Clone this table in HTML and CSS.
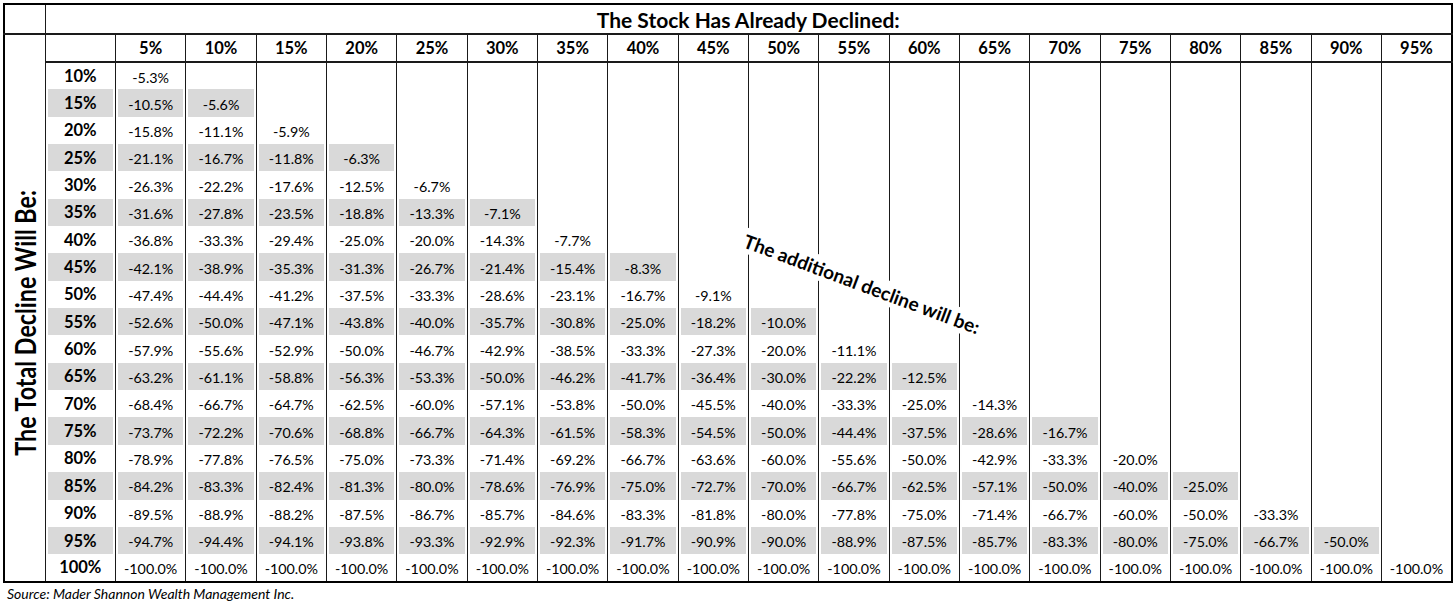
FILE: index.html
```html
<!DOCTYPE html>
<html lang="en">
<head>
<meta charset="utf-8">
<title>Additional Decline Table</title>
<link rel="stylesheet" href="styles.css">
</head>
<body>
<div class="page">
<table class="grid">
<colgroup>
<col class="c-label"><col class="c-rowhead">
<col class="c-data"><col class="c-data"><col class="c-data"><col class="c-data"><col class="c-data"><col class="c-data"><col class="c-data"><col class="c-data"><col class="c-data"><col class="c-data"><col class="c-data"><col class="c-data"><col class="c-data"><col class="c-data"><col class="c-data"><col class="c-data"><col class="c-data"><col class="c-data"><col class="c-data">
</colgroup>
<tr class="r-title"><th class="corner"></th><th class="title" colspan="20">The Stock Has Already Declined:</th></tr>
<tr class="r-head"><th class="label" rowspan="20"><div class="label-box"><span class="label-text">The Total Decline Will Be:</span></div></th><th class="blank"></th><th class="colhead">5%</th><th class="colhead">10%</th><th class="colhead">15%</th><th class="colhead">20%</th><th class="colhead">25%</th><th class="colhead">30%</th><th class="colhead">35%</th><th class="colhead">40%</th><th class="colhead">45%</th><th class="colhead">50%</th><th class="colhead">55%</th><th class="colhead">60%</th><th class="colhead">65%</th><th class="colhead">70%</th><th class="colhead">75%</th><th class="colhead">80%</th><th class="colhead">85%</th><th class="colhead">90%</th><th class="colhead">95%</th></tr>
<tr class="r-data"><th class="rowhead">10%</th><td>-5.3%</td><td></td><td></td><td></td><td></td><td></td><td></td><td></td><td></td><td></td><td></td><td></td><td></td><td></td><td></td><td></td><td></td><td></td><td></td></tr>
<tr class="r-data shade"><th class="rowhead">15%</th><td>-10.5%</td><td>-5.6%</td><td></td><td></td><td></td><td></td><td></td><td></td><td></td><td></td><td></td><td></td><td></td><td></td><td></td><td></td><td></td><td></td><td></td></tr>
<tr class="r-data"><th class="rowhead">20%</th><td>-15.8%</td><td>-11.1%</td><td>-5.9%</td><td></td><td></td><td></td><td></td><td></td><td></td><td></td><td></td><td></td><td></td><td></td><td></td><td></td><td></td><td></td><td></td></tr>
<tr class="r-data shade"><th class="rowhead">25%</th><td>-21.1%</td><td>-16.7%</td><td>-11.8%</td><td>-6.3%</td><td></td><td></td><td></td><td></td><td></td><td></td><td></td><td></td><td></td><td></td><td></td><td></td><td></td><td></td><td></td></tr>
<tr class="r-data"><th class="rowhead">30%</th><td>-26.3%</td><td>-22.2%</td><td>-17.6%</td><td>-12.5%</td><td>-6.7%</td><td></td><td></td><td></td><td></td><td></td><td></td><td></td><td></td><td></td><td></td><td></td><td></td><td></td><td></td></tr>
<tr class="r-data shade"><th class="rowhead">35%</th><td>-31.6%</td><td>-27.8%</td><td>-23.5%</td><td>-18.8%</td><td>-13.3%</td><td>-7.1%</td><td></td><td></td><td></td><td></td><td></td><td></td><td></td><td></td><td></td><td></td><td></td><td></td><td></td></tr>
<tr class="r-data"><th class="rowhead">40%</th><td>-36.8%</td><td>-33.3%</td><td>-29.4%</td><td>-25.0%</td><td>-20.0%</td><td>-14.3%</td><td>-7.7%</td><td></td><td></td><td></td><td></td><td></td><td></td><td></td><td></td><td></td><td></td><td></td><td></td></tr>
<tr class="r-data shade"><th class="rowhead">45%</th><td>-42.1%</td><td>-38.9%</td><td>-35.3%</td><td>-31.3%</td><td>-26.7%</td><td>-21.4%</td><td>-15.4%</td><td>-8.3%</td><td></td><td></td><td></td><td></td><td></td><td></td><td></td><td></td><td></td><td></td><td></td></tr>
<tr class="r-data"><th class="rowhead">50%</th><td>-47.4%</td><td>-44.4%</td><td>-41.2%</td><td>-37.5%</td><td>-33.3%</td><td>-28.6%</td><td>-23.1%</td><td>-16.7%</td><td>-9.1%</td><td></td><td></td><td></td><td></td><td></td><td></td><td></td><td></td><td></td><td></td></tr>
<tr class="r-data shade"><th class="rowhead">55%</th><td>-52.6%</td><td>-50.0%</td><td>-47.1%</td><td>-43.8%</td><td>-40.0%</td><td>-35.7%</td><td>-30.8%</td><td>-25.0%</td><td>-18.2%</td><td>-10.0%</td><td></td><td></td><td></td><td></td><td></td><td></td><td></td><td></td><td></td></tr>
<tr class="r-data"><th class="rowhead">60%</th><td>-57.9%</td><td>-55.6%</td><td>-52.9%</td><td>-50.0%</td><td>-46.7%</td><td>-42.9%</td><td>-38.5%</td><td>-33.3%</td><td>-27.3%</td><td>-20.0%</td><td>-11.1%</td><td></td><td></td><td></td><td></td><td></td><td></td><td></td><td></td></tr>
<tr class="r-data shade"><th class="rowhead">65%</th><td>-63.2%</td><td>-61.1%</td><td>-58.8%</td><td>-56.3%</td><td>-53.3%</td><td>-50.0%</td><td>-46.2%</td><td>-41.7%</td><td>-36.4%</td><td>-30.0%</td><td>-22.2%</td><td>-12.5%</td><td></td><td></td><td></td><td></td><td></td><td></td><td></td></tr>
<tr class="r-data"><th class="rowhead">70%</th><td>-68.4%</td><td>-66.7%</td><td>-64.7%</td><td>-62.5%</td><td>-60.0%</td><td>-57.1%</td><td>-53.8%</td><td>-50.0%</td><td>-45.5%</td><td>-40.0%</td><td>-33.3%</td><td>-25.0%</td><td>-14.3%</td><td></td><td></td><td></td><td></td><td></td><td></td></tr>
<tr class="r-data shade"><th class="rowhead">75%</th><td>-73.7%</td><td>-72.2%</td><td>-70.6%</td><td>-68.8%</td><td>-66.7%</td><td>-64.3%</td><td>-61.5%</td><td>-58.3%</td><td>-54.5%</td><td>-50.0%</td><td>-44.4%</td><td>-37.5%</td><td>-28.6%</td><td>-16.7%</td><td></td><td></td><td></td><td></td><td></td></tr>
<tr class="r-data"><th class="rowhead">80%</th><td>-78.9%</td><td>-77.8%</td><td>-76.5%</td><td>-75.0%</td><td>-73.3%</td><td>-71.4%</td><td>-69.2%</td><td>-66.7%</td><td>-63.6%</td><td>-60.0%</td><td>-55.6%</td><td>-50.0%</td><td>-42.9%</td><td>-33.3%</td><td>-20.0%</td><td></td><td></td><td></td><td></td></tr>
<tr class="r-data shade"><th class="rowhead">85%</th><td>-84.2%</td><td>-83.3%</td><td>-82.4%</td><td>-81.3%</td><td>-80.0%</td><td>-78.6%</td><td>-76.9%</td><td>-75.0%</td><td>-72.7%</td><td>-70.0%</td><td>-66.7%</td><td>-62.5%</td><td>-57.1%</td><td>-50.0%</td><td>-40.0%</td><td>-25.0%</td><td></td><td></td><td></td></tr>
<tr class="r-data"><th class="rowhead">90%</th><td>-89.5%</td><td>-88.9%</td><td>-88.2%</td><td>-87.5%</td><td>-86.7%</td><td>-85.7%</td><td>-84.6%</td><td>-83.3%</td><td>-81.8%</td><td>-80.0%</td><td>-77.8%</td><td>-75.0%</td><td>-71.4%</td><td>-66.7%</td><td>-60.0%</td><td>-50.0%</td><td>-33.3%</td><td></td><td></td></tr>
<tr class="r-data shade"><th class="rowhead">95%</th><td>-94.7%</td><td>-94.4%</td><td>-94.1%</td><td>-93.8%</td><td>-93.3%</td><td>-92.9%</td><td>-92.3%</td><td>-91.7%</td><td>-90.9%</td><td>-90.0%</td><td>-88.9%</td><td>-87.5%</td><td>-85.7%</td><td>-83.3%</td><td>-80.0%</td><td>-75.0%</td><td>-66.7%</td><td>-50.0%</td><td></td></tr>
<tr class="r-data"><th class="rowhead">100%</th><td>-100.0%</td><td>-100.0%</td><td>-100.0%</td><td>-100.0%</td><td>-100.0%</td><td>-100.0%</td><td>-100.0%</td><td>-100.0%</td><td>-100.0%</td><td>-100.0%</td><td>-100.0%</td><td>-100.0%</td><td>-100.0%</td><td>-100.0%</td><td>-100.0%</td><td>-100.0%</td><td>-100.0%</td><td>-100.0%</td><td>-100.0%</td></tr>
</table>
<div class="note">The additional decline will be:</div>
<p class="source">Source: Mader Shannon Wealth Management Inc.</p>
</div>
</body>
</html>
```
FILE: styles.css
```css
html, body {
  margin: 0;
  padding: 0;
  background: #fff;
}

body {
  font-family: Lato, "Liberation Sans", sans-serif;
  color: #000;
}

.page {
  position: relative;
  width: 1456px;
  height: 603px;
  padding: 3px 0 0 3px;
  box-sizing: border-box;
  overflow: hidden;
}

.grid {
  border-collapse: collapse;
  table-layout: fixed;
  width: 1450px;
  border: 2px solid #000;
}

.c-label { width: 41px; }
.c-rowhead { width: 70.5px; }
.c-data { width: 70.34px; }

.grid th,
.grid td {
  padding: 0;
  border-left: 1px solid #1a1a1a;
  border-right: 1px solid #1a1a1a;
  text-align: center;
  vertical-align: middle;
}

.r-title { height: 30px; }
.r-head { height: 28px; }
.r-data { height: 27.35px; }

.corner,
.title {
  border-bottom: 2px solid #1a1a1a;
}

.title {
  font-size: 21px;
  font-weight: 700;
  padding-top: 2px;
}

.blank,
.colhead {
  border-bottom: 2px solid #1a1a1a;
}

.colhead {
  font-size: 16.5px;
  font-weight: 700;
  padding-top: 2px;
}

.label {
  padding: 0;
}

.label-box {
  height: 545px;
  box-sizing: border-box;
  padding-top: 31px;
  display: flex;
  align-items: center;
  justify-content: center;
}

.label-text {
  display: block;
  writing-mode: vertical-rl;
  transform: rotate(180deg) scaleX(1.2);
  font-size: 23.3px;
  font-weight: 700;
  white-space: nowrap;
}

.rowhead {
  font-size: 16.5px;
  font-weight: 700;
  padding-top: 2px;
}

.r-data td {
  font-size: 14.3px;
  padding-top: 2px;
}

.shade .rowhead,
.shade td:not(:empty) {
  background: #d9d9d9;
  box-shadow: inset 2px 0 #fff, inset -2px 0 #fff;
}

.note {
  position: absolute;
  left: 741px;
  top: 226px;
  padding: 1px 4px;
  background: #fff;
  font-size: 19px;
  font-weight: 700;
  white-space: nowrap;
  transform: rotate(20.5deg);
  transform-origin: 0 50%;
}

.source {
  margin: 0;
  padding: 2px 0 0 4px;
  font-size: 14px;
  font-style: italic;
}
```
